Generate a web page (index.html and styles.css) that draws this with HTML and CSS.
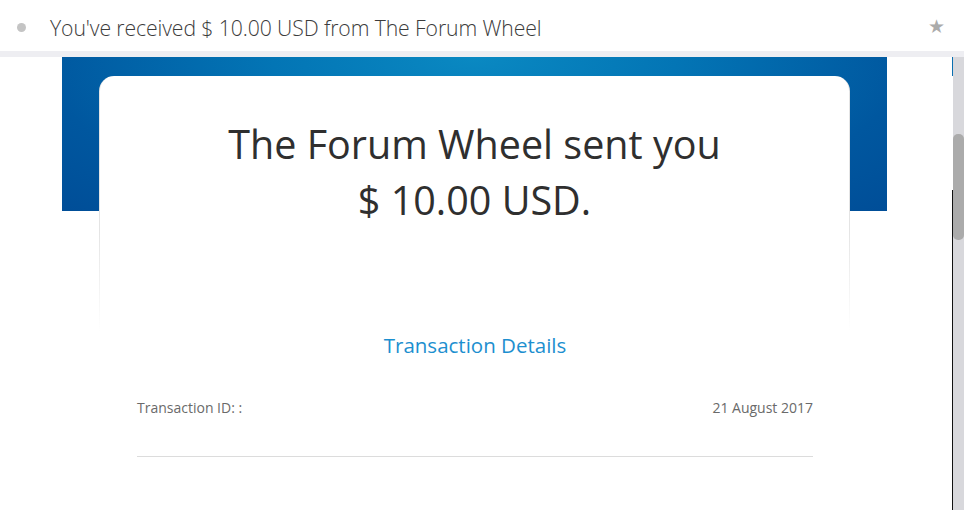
FILE: index.html
```html
<!DOCTYPE html>
<html lang="en">
<head>
    <meta charset="UTF-8">
    <title>You've received $ 10.00 USD from The Forum Wheel</title>
    <link rel="stylesheet" href="styles.css">
</head>
<body>
    <div class="mail-header">
        <span class="unread-dot"></span>
        <h1 class="subject">You've received $ 10.00 USD from The Forum Wheel</h1>
        <span class="star">&#9733;</span>
    </div>
    <div class="reader">
        <div class="mail-body">
            <div class="email">
                <div class="card-head">
                    <h2 class="headline">The Forum Wheel sent you<br>$ 10.00 USD.</h2>
                </div>
                <div class="details">
                    <h3 class="details-title">Transaction Details</h3>
                    <div class="details-row">
                        <span>Transaction ID: :</span>
                        <span>21 August 2017</span>
                    </div>
                </div>
            </div>
        </div>
        <div class="edge"></div>
        <div class="scrollbar"><div class="thumb"></div></div>
    </div>
</body>
</html>
```

FILE: styles.css
```css
body {
    margin: 0;
    padding: 0;
    background: #ffffff;
    font-family: 'Open Sans', 'Noto Sans', sans-serif;
    height: 510px;
    overflow: hidden;
    display: flex;
    flex-direction: column;
}
.mail-header {
    height: 47px;
    display: flex;
    align-items: center;
    padding: 4px 19px 0 17px;
    border-bottom: 6px solid #eeeef2;
    flex-shrink: 0;
}
.unread-dot {
    width: 9px;
    height: 9px;
    border-radius: 50%;
    background: #c4c4c4;
    margin: 0 24px 1px 0;
}
.subject {
    flex: 1;
    margin: 0;
    font-size: 21.2px;
    font-weight: 300;
    color: #3c3c3c;
    letter-spacing: -0.1px;
}
.star {
    font-size: 19px;
    color: #ababab;
    margin-bottom: 4px;
}
.reader {
    flex: 1;
    display: flex;
    min-height: 0;
}
.mail-body {
    flex: 1;
    overflow: hidden;
}
.email {
    width: 825px;
    margin-left: 62px;
    padding: 19px 37px 0;
    box-sizing: border-box;
    background: radial-gradient(ellipse 70% 140% at 50% 0, #0a89c2 0%, #0375b5 35%, #00579f 75%, #004e98 100%) no-repeat;
    background-size: 100% 154px;
}
.card-head {
    border-radius: 15px 15px 0 0;
    border: solid transparent;
    border-width: 0 1px;
    background: linear-gradient(#ffffff, #ffffff) padding-box, linear-gradient(#e4e4e4 60%, #ffffff 100%) border-box;
    padding: 40px 0 103px;
    text-align: center;
}
.headline {
    margin: 0;
    font-size: 39.5px;
    font-weight: 400;
    line-height: 56px;
    color: #2f2f2f;
}
.details {
    padding: 0 37px 0 38px;
}
.details-title {
    margin: 0;
    text-align: center;
    font-size: 20.5px;
    font-weight: 400;
    line-height: 28px;
    color: #1d8fcf;
}
.details-row {
    display: flex;
    justify-content: space-between;
    margin-top: 40px;
    padding-bottom: 39px;
    border-bottom: 1px solid #dcdcdc;
    font-size: 14px;
    line-height: 18px;
    color: #6a6a6a;
}
.edge {
    width: 1px;
    background: linear-gradient(#0a6fb0 0, #0a6fb0 19px, transparent 19px, transparent 133px, #111111 133px);
}
.scrollbar {
    width: 11px;
    background: #d8d8dc;
    padding-top: 77px;
}
.thumb {
    height: 106px;
    border-radius: 5px;
    background: #ababab;
}
```
